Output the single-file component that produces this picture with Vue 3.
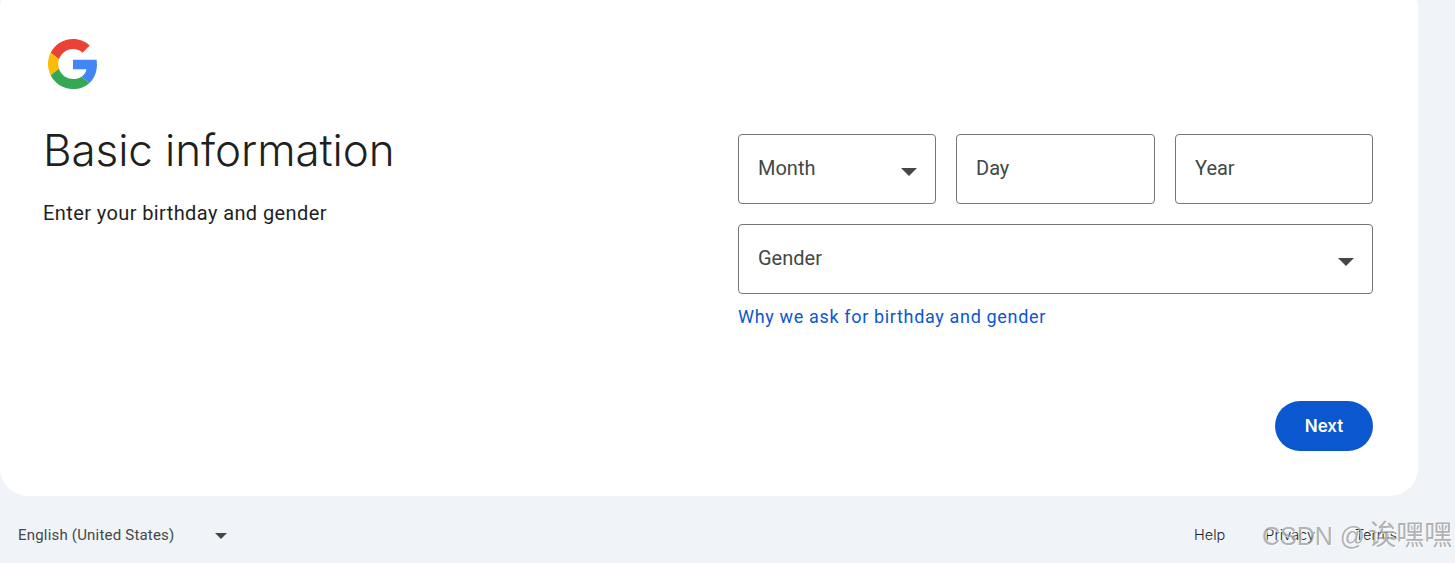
<script setup>
const footerLinks = ['Help', 'Privacy', 'Terms']
</script>

<template>
  <div class="page">
    <main class="card">
      <svg class="logo" viewBox="0 0 48 48" width="50" height="50" aria-label="Google">
        <path fill="#EA4335" d="M24 9.5c3.54 0 6.71 1.22 9.21 3.6l6.85-6.85C35.9 2.38 30.47 0 24 0 14.62 0 6.51 5.38 2.56 13.22l7.98 6.19C12.43 13.72 17.74 9.5 24 9.5z"/>
        <path fill="#4285F4" d="M46.98 24.55c0-1.57-.15-3.09-.38-4.55H24v9.02h12.94c-.58 2.96-2.26 5.48-4.78 7.18l7.73 6c4.51-4.18 7.09-10.36 7.09-17.65z"/>
        <path fill="#FBBC05" d="M10.53 28.59c-.48-1.45-.76-2.99-.76-4.59s.27-3.14.76-4.59l-7.98-6.19C.92 16.46 0 20.12 0 24c0 3.88.92 7.54 2.56 10.78l7.97-6.19z"/>
        <path fill="#34A853" d="M24 48c6.48 0 11.93-2.13 15.89-5.81l-7.73-6c-2.15 1.45-4.92 2.3-8.16 2.3-6.26 0-11.57-4.22-13.47-9.91l-7.98 6.19C6.51 42.62 14.62 48 24 48z"/>
      </svg>

      <div class="columns">
        <section class="intro">
          <h1>Basic information</h1>
          <p>Enter your birthday and gender</p>
        </section>

        <section class="form">
          <div class="date-row">
            <div class="field">
              <span>Month</span>
              <i class="caret"></i>
            </div>
            <div class="field"><span>Day</span></div>
            <div class="field"><span>Year</span></div>
          </div>
          <div class="field gender">
            <span>Gender</span>
            <i class="caret"></i>
          </div>
          <a class="why" href="#">Why we ask for birthday and gender</a>
        </section>
      </div>

      <div class="actions">
        <button class="next" type="button">Next</button>
      </div>
    </main>

    <footer class="footer">
      <div class="lang">
        <span>English (United States)</span>
        <i class="caret small"></i>
      </div>
      <nav class="links">
        <a v-for="link in footerLinks" :key="link" href="#">{{ link }}</a>
      </nav>
    </footer>

    <div class="watermark">CSDN @<span class="cjk">诶嘿嘿</span></div>
  </div>
</template>

<style>
html, body {
  margin: 0;
  background: #f0f4f9;
  overflow: hidden;
}
</style>

<style scoped>
.page {
  position: relative;
  width: 1455px;
  height: 563px;
  overflow: hidden;
  background: #f0f4f9;
  font-family: Roboto, "Noto Sans", sans-serif;
}
.card {
  box-sizing: border-box;
  width: 1418px;
  height: 516px;
  margin-top: -20px;
  padding: 59px 45px 0 43px;
  background: #fff;
  border-radius: 28px;
}
.logo {
  display: block;
  margin-left: 5px;
}
.columns {
  display: flex;
  justify-content: space-between;
  margin-top: 45px;
}
.intro h1 {
  margin: -10px 0 0;
  font-family: Inter, Roboto, sans-serif;
  font-size: 44px;
  font-weight: 300;
  line-height: 52px;
  letter-spacing: -0.1px;
  color: #1f1f1f;
}
.intro p {
  margin: 25px 0 0;
  font-size: 20px;
  line-height: 24px;
  letter-spacing: 0.4px;
  color: #1f1f1f;
}
.form {
  width: 635px;
}
.date-row {
  display: grid;
  grid-template-columns: 198px 199px 198px;
  gap: 20px;
}
.field {
  box-sizing: border-box;
  height: 70px;
  display: flex;
  align-items: center;
  justify-content: space-between;
  padding: 0 19px;
  border: 1px solid #747775;
  border-radius: 4px;
  font-size: 20px;
  color: #444746;
}
.field span {
  margin-top: -2px;
}
.gender {
  margin-top: 20px;
}
.caret {
  display: block;
  width: 0;
  height: 0;
  margin: 5px -1px 0 0;
  border-left: 8px solid transparent;
  border-right: 8px solid transparent;
  border-top: 8px solid #444746;
}
.caret.small {
  margin: 2px 0 0;
  border-left-width: 6px;
  border-right-width: 6px;
  border-top-width: 6px;
}
.why {
  display: block;
  margin-top: 12px;
  font-size: 18px;
  line-height: 22px;
  font-weight: 400;
  letter-spacing: 0.66px;
  color: #0b57d0;
  text-decoration: none;
}
.actions {
  display: flex;
  justify-content: flex-end;
  margin-top: 73px;
}
.next {
  width: 98px;
  height: 50px;
  border: 0;
  border-radius: 25px;
  background: #0b57d0;
  color: #fff;
  font-family: Inter, Roboto, sans-serif;
  font-size: 17px;
  font-weight: 600;
}
.footer {
  display: flex;
  justify-content: space-between;
  align-items: center;
  height: 28px;
  margin-top: 25px;
  padding: 0 58px 0 18px;
  font-size: 15px;
  letter-spacing: 0.2px;
}
.lang {
  display: flex;
  align-items: center;
  gap: 41px;
  color: #444746;
}
.links {
  display: flex;
  gap: 40px;
  margin-top: -1px;
}
.links a {
  font-family: Inter, Roboto, sans-serif;
  font-size: 14.5px;
  font-weight: 300;
  letter-spacing: 0;
  color: #1f1f1f;
  text-decoration: none;
}
.watermark {
  position: absolute;
  left: 1262px;
  top: 519px;
  font-family: "Liberation Sans", "Noto Sans CJK SC", sans-serif;
  font-size: 25px;
  line-height: 34px;
  white-space: nowrap;
  color: rgba(130, 130, 130, 0.6);
  text-shadow: 1px 1px 0 rgba(255, 255, 255, 0.7);
  pointer-events: none;
}
.cjk {
  margin-left: 3px;
  font-size: 28px;
}
</style>
